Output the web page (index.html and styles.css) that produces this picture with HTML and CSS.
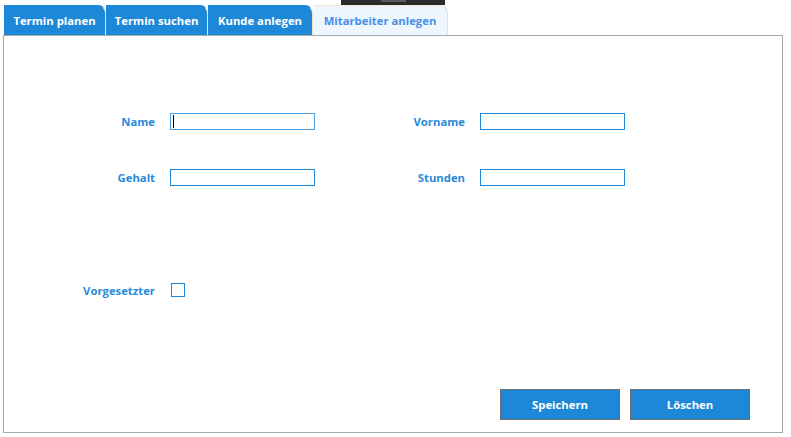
FILE: index.html
```html
<!DOCTYPE html>
<html lang="de">
<head>
<meta charset="utf-8">
<title>Mitarbeiter anlegen</title>
<link rel="stylesheet" href="styles.css">
</head>
<body>
<div class="window-strip"><span class="strip-grip"></span></div>
<nav class="tabs">
  <div class="tab tab-1">Termin planen</div>
  <div class="tab tab-2">Termin suchen</div>
  <div class="tab tab-3">Kunde anlegen</div>
  <div class="tab tab-4 active">Mitarbeiter anlegen</div>
</nav>
<main class="panel">
  <div class="form">
    <div class="row">
      <label class="lbl">Name</label>
      <span class="field focused"><input type="text"><span class="caret"></span></span>
      <label class="lbl lbl-wide">Vorname</label>
      <span class="field"><input type="text"></span>
    </div>
    <div class="row">
      <label class="lbl">Gehalt</label>
      <span class="field"><input type="text"></span>
      <label class="lbl lbl-wide">Stunden</label>
      <span class="field"><input type="text"></span>
    </div>
    <div class="row row-check">
      <label class="lbl">Vorgesetzter</label>
      <span class="check"></span>
    </div>
  </div>
  <div class="actions">
    <button class="btn">Speichern</button>
    <button class="btn">Löschen</button>
  </div>
</main>
</body>
</html>
```
FILE: styles.css
```css
* { box-sizing: border-box; }
html, body { margin: 0; padding: 0; background: #ffffff; }
body {
  width: 791px;
  height: 437px;
  font-family: "Open Sans", "Noto Sans", sans-serif;
  font-weight: 700;
  font-size: 11.3px;
  position: relative;
  overflow: hidden;
}
.window-strip {
  position: absolute;
  left: 341px;
  top: 0;
  width: 104px;
  height: 5px;
  background: #2b2b2b;
}
.strip-grip {
  position: absolute;
  left: 40px;
  top: 0;
  width: 25px;
  height: 2px;
  background: #5a5a5a;
}
.tabs {
  display: flex;
  padding: 5px 0 0 4px;
  height: 35px;
}
.tab {
  height: 30px;
  background: #1e88d8;
  color: #ffffff;
  display: flex;
  align-items: center;
  justify-content: center;
  border-top-right-radius: 8px;
  border-top: 1px solid #1e88d8;
  border-right: 1px solid #efe3c8;
  padding-bottom: 1px;
}
.tab-1 { width: 102px; }
.tab-2 { width: 102px; }
.tab-3 { width: 105px; }
.tab-4 { width: 135px; }
.tab.active {
  background: #eef6fe;
  color: #4a8ee6;
  border-top: 1px solid #f3e6cc;
  border-right: 1px solid #f0dfc0;
}
.panel {
  margin-left: 3px;
  width: 780px;
  height: 398px;
  border: 1px solid #a8a8a8;
  display: flex;
  flex-direction: column;
}
.form {
  padding-top: 77px;
  display: flex;
  flex-direction: column;
  gap: 39px;
}
.row {
  display: flex;
  align-items: center;
  height: 17px;
}
.row-check {
  margin-top: 58px;
  height: 14px;
}
.lbl {
  width: 151px;
  text-align: right;
  color: #2a8ad8;
  margin-right: 15px;
}
.lbl-wide { width: 150px; }
.field {
  position: relative;
  display: block;
  width: 145px;
  height: 17px;
}
.field input {
  display: block;
  width: 100%;
  height: 100%;
  margin: 0;
  padding: 0 3px;
  border: 1px solid #1e88d8;
  background: #ffffff;
  outline: none;
  font: inherit;
}
.field.focused input { border-color: #4b9ee0; }
.caret {
  position: absolute;
  left: 3px;
  top: 2px;
  width: 1px;
  height: 13px;
  background: #000000;
}
.check {
  display: block;
  width: 14px;
  height: 14px;
  margin-left: 1px;
  border: 1px solid #1e88d8;
  background: #ffffff;
}
.actions {
  margin-top: auto;
  display: flex;
  justify-content: flex-end;
  gap: 10px;
  padding: 0 32px 12px 0;
}
.btn {
  width: 120px;
  height: 31px;
  background: #1e88d8;
  border: 1px solid #6e6e6e;
  color: #ffffff;
  font: inherit;
  font-weight: 700;
  padding: 0;
  cursor: pointer;
}
```
